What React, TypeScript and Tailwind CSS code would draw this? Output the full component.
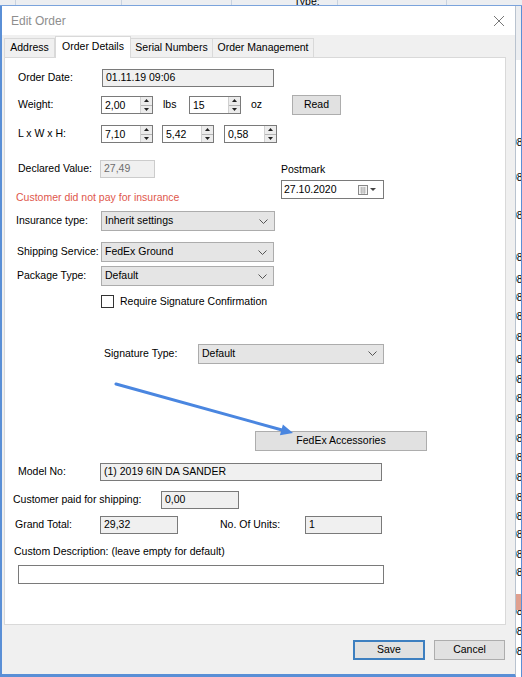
import React from 'react';

const Tri = ({ up }: { up?: boolean }) => (
  <svg width="5" height="3" viewBox="0 0 5 3">
    <polygon points={up ? '0,3 5,3 2.5,0' : '0,0 5,0 2.5,3'} fill="#222" />
  </svg>
);

const Spin = ({ value, className }: { value: string; className: string }) => (
  <div className={`flex h-[18px] border border-[#7a7a7a] bg-white ${className}`}>
    <span className="flex-1 pl-[3px] leading-[16px]">{value}</span>
    <div className="flex w-[12px] flex-col border-l border-[#d0d0d0]">
      <div className="flex flex-1 items-center justify-center border-b border-[#b5b5b5] bg-[#ececec]"><Tri up /></div>
      <div className="flex flex-1 items-center justify-center bg-[#ececec]"><Tri /></div>
    </div>
  </div>
);

const Field = ({ value, className, disabled }: { value?: string; className: string; disabled?: boolean }) => (
  <div
    className={`flex h-[18px] items-center border pl-[3px] ${
      disabled ? 'border-[#cccccc] bg-[#f0f0f0] text-[#6d6d6d]' : 'border-[#7a7a7a] bg-[#f0f0f0]'
    } ${className}`}
  >
    {value}
  </div>
);

const Combo = ({ value, className }: { value: string; className: string }) => (
  <div className={`flex h-[20px] items-center justify-between border border-[#acacac] bg-[#e5e5e5] pl-[3px] pr-[6px] ${className}`}>
    <span>{value}</span>
    <svg width="9" height="5" viewBox="0 0 9 5">
      <polyline points="0.5,0.5 4.5,4.5 8.5,0.5" fill="none" stroke="#555" strokeWidth="1" />
    </svg>
  </div>
);

const Btn = ({ label, className }: { label: string; className: string }) => (
  <div className={`flex h-[20px] items-center justify-center border border-[#adadad] bg-[#e1e1e1] ${className}`}>{label}</div>
);

const gridRows = [142, 177, 215, 257, 279, 297, 316, 337, 359, 379, 398, 418, 438, 457, 477, 497, 516, 534, 554, 572, 611, 631, 651];

export default function App() {
  return (
    <div className="flex h-[677px] w-[522px] flex-col overflow-hidden bg-[#f0f0f0] font-['Liberation_Sans',Arial,sans-serif] text-[10.5px] text-black">
      {/* app grid peeking above the dialog */}
      <div className="flex h-[6px] shrink-0 overflow-hidden border-b border-[#7aa3dc] bg-[#eceef1] text-[10.5px] leading-[10px]">
        <div className="w-[16px] border-r border-[#c9d3e0]" />
        <div className="w-[106px] border-r border-[#c9d3e0]" />
        <div className="w-[110px] border-r border-[#c9d3e0]" />
        <div className="w-[106px] border-r border-[#c9d3e0] pl-[62px] -mt-[4px]">Type:</div>
        <div className="w-[109px] border-r border-[#c9d3e0]" />
        <div className="flex-1" />
      </div>

      <div className="flex flex-1">
        {/* dialog */}
        <div className="flex w-[516px] flex-col border-b-[3px] border-l-2 border-r border-[#5a8fd6] border-r-[#b9c3cf]">
          <div className="flex h-[29px] shrink-0 items-center justify-between bg-white pl-[9px] pr-[10px]">
            <span className="text-[12px] text-[#8e8e8e]">Edit Order</span>
            <svg width="12" height="12" viewBox="0 0 12 12">
              <path d="M1 1 L11 11 M11 1 L1 11" stroke="#777" strokeWidth="1" />
            </svg>
          </div>

          <div className="flex flex-1 flex-col bg-[#f0f0f0] pl-[2px] pr-[9px]">
            {/* tabs */}
            <div className="mt-[1px] flex h-[21px] items-end">
              <div className="flex h-[19px] w-[51px] items-center justify-center border border-b-0 border-[#d9d9d9] bg-[#f0f0f0]">Address</div>
              <div className="relative z-10 -mb-px flex h-[22px] w-[76px] items-center justify-center border border-b-0 border-[#d9d9d9] bg-white pb-[2px]">Order Details</div>
              <div className="flex h-[19px] w-[82px] items-center justify-center border border-b-0 border-l-0 border-[#d9d9d9] bg-[#f0f0f0]">Serial Numbers</div>
              <div className="flex h-[19px] w-[101px] items-center justify-center border border-b-0 border-l-0 border-[#d9d9d9] bg-[#f0f0f0]">Order Management</div>
            </div>

            {/* tab panel */}
            <div className="relative flex h-[568px] w-[502px] flex-col border border-[#d9d9d9] bg-white">
              <div className="mt-[11px] flex items-center pl-[13px]">
                <span className="w-[84px]">Order Date:</span>
                <Field value="01.11.19 09:06" className="w-[172px]" />
              </div>

              <div className="mt-[8px] flex items-center pl-[13px]">
                <span className="w-[83px]">Weight:</span>
                <Spin value="2,00" className="w-[52px]" />
                <span className="ml-[10px] w-[26px]">lbs</span>
                <Spin value="15" className="w-[52px]" />
                <span className="ml-[10px] w-[41px]">oz</span>
                <Btn label="Read" className="w-[49px]" />
              </div>

              <div className="mt-[10px] flex items-center pl-[13px]">
                <span className="w-[83px]">L x W x H:</span>
                <Spin value="7,10" className="w-[52px]" />
                <Spin value="5,42" className="ml-[9px] w-[52px]" />
                <Spin value="0,58" className="ml-[10px] w-[53px]" />
              </div>

              <div className="mt-[17px] flex pl-[11px]">
                <div className="flex w-[265px] flex-col">
                  <div className="flex items-center pl-[2px]">
                    <span className="w-[82px]">Declared Value:</span>
                    <Field value="27,49" className="w-[55px]" disabled />
                  </div>
                  <div className="mt-[12px] leading-[14px] text-[#e0574c]">Customer did not pay for insurance</div>
                </div>
                <div className="flex flex-col">
                  <div className="mt-[2px] leading-[14px]">Postmark</div>
                  <div className="mt-[4px] flex h-[19px] w-[103px] items-center justify-between border border-[#7a7a7a] bg-white pl-[2px] pr-[7px]">
                    <span>27.10.2020</span>
                    <span className="flex items-center gap-[2px]">
                      <svg width="10" height="10" viewBox="0 0 10 10">
                        <rect x="0.5" y="0.5" width="9" height="9" fill="#f4f4f4" stroke="#888" />
                        <path d="M2 3h6M2 5h6M2 7h6M3.5 2v7M5 2v7M6.5 2v7" stroke="#aaa" strokeWidth="0.6" />
                      </svg>
                      <svg width="6" height="3" viewBox="0 0 6 3">
                        <polygon points="0,0 6,0 3,3" fill="#444" />
                      </svg>
                    </span>
                  </div>
                </div>
              </div>

              <div className="mt-[7px] flex items-center pl-[11px]">
                <span className="w-[85px]">Insurance type:</span>
                <Combo value="Inherit settings" className="w-[174px]" />
              </div>

              <div className="mt-[11px] flex items-center pl-[12px]">
                <span className="w-[84px]">Shipping Service:</span>
                <Combo value="FedEx Ground" className="w-[173px]" />
              </div>

              <div className="mt-[4px] flex items-center pl-[12px]">
                <span className="w-[84px]">Package Type:</span>
                <Combo value="Default" className="w-[173px]" />
              </div>

              <div className="mt-[8px] flex items-center pl-[96px]">
                <div className="h-[13px] w-[13px] border border-[#333] bg-white" />
                <span className="ml-[6px]">Require Signature Confirmation</span>
              </div>

              <div className="mt-[34px] flex items-center pl-[99px]">
                <span className="w-[94px]">Signature Type:</span>
                <Combo value="Default" className="w-[186px]" />
              </div>

              <Btn label="FedEx Accessories" className="ml-[250px] mt-[67px] w-[172px]" />

              <div className="mt-[12px] flex items-center pl-[13px]">
                <span className="w-[82px]">Model No:</span>
                <Field value="(1) 2019 6IN DA SANDER" className="w-[282px]" />
              </div>

              <div className="mt-[10px] flex items-center pl-[8px]">
                <span className="w-[148px]">Customer paid for shipping:</span>
                <Field value="0,00" className="w-[78px]" />
              </div>

              <div className="mt-[7px] flex items-center pl-[10px]">
                <span className="w-[85px]">Grand Total:</span>
                <Field value="29,32" className="w-[78px]" />
                <span className="ml-[42px] w-[85px]">No. Of Units:</span>
                <Field value="1" className="w-[77px]" />
              </div>

              <div className="mt-[10px] pl-[9px] leading-[14px]">Custom Description: (leave empty for default)</div>

              <div className="ml-[13px] mt-[7px] h-[19px] w-[366px] border border-[#7a7a7a] bg-white" />

              {/* annotation arrow */}
              <svg className="pointer-events-none absolute left-0 top-0" width="502" height="568">
                <line x1="111" y1="326" x2="277" y2="372" stroke="#4a86e0" strokeWidth="3" strokeLinecap="round" />
                <polygon points="288,375 274.9,377.3 277.9,366.5" fill="#4a86e0" />
              </svg>
            </div>

            {/* buttons */}
            <div className="mt-[15px] flex justify-end gap-[9px] pr-px">
              <div className="flex h-[20px] w-[72px] items-center justify-center border-2 border-[#3d7fc0] bg-[#e1e1e1]">Save</div>
              <Btn label="Cancel" className="w-[71px]" />
            </div>
          </div>
        </div>

        {/* app grid to the right */}
        <div className="relative flex-1 overflow-hidden border-r border-[#5a8fd6] bg-white">
          <div className="h-[54px] bg-[#eceef1]" />
          {gridRows.map((y) => (
            <div key={y} className="absolute left-[-5px] whitespace-nowrap leading-[12px]" style={{ top: y - 6 - 6 }}>
              08
            </div>
          ))}
          <div className="absolute left-0 top-[588px] h-[16px] w-full bg-[#e0a08f]" />
        </div>
      </div>
    </div>
  );
}
